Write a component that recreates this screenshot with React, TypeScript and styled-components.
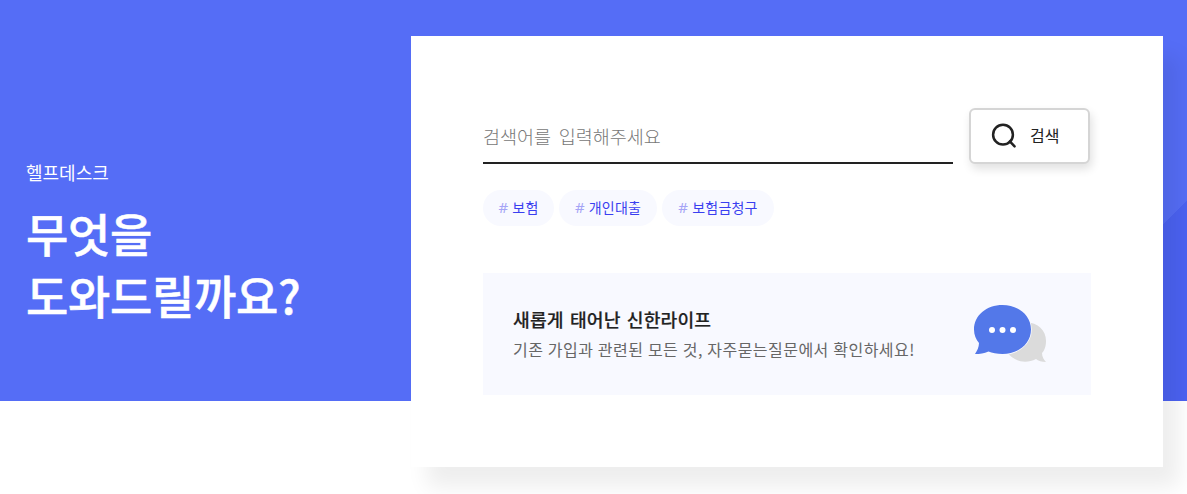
import { useState } from 'react';
import styled, { createGlobalStyle } from 'styled-components';

const GlobalStyle = createGlobalStyle`
	* {
		box-sizing: border-box;
	}

	body {
		margin: 0;
		overflow: hidden;
		background: #fff;
		font-family: 'Noto Sans CJK KR', 'Noto Sans', sans-serif;
		color: #222;
	}

	h1,
	p {
		margin: 0;
	}
`;

const Hero = styled.main`
	display: flex;
	align-items: flex-start;
	width: 1187px;
	height: 494px;
	padding: 36px 24px 0 26px;
	overflow: hidden;
	background:
		linear-gradient(135deg, transparent 50%, #4b62f2 50%) right 201px / 200px 200px no-repeat,
		linear-gradient(#556df6, #556df6) 0 0 / 100% 401px no-repeat,
		#fff;
`;

const Intro = styled.div`
	flex: 0 0 385px;
	padding-top: 122px;
	color: #fff;
`;

const Eyebrow = styled.p`
	font-size: 18px;
	line-height: 28px;
`;

const Title = styled.h1`
	margin-top: 15px;
	font-size: 46px;
	font-weight: 500;
	line-height: 62px;
	letter-spacing: -0.3px;
	-webkit-text-stroke: 0.5px #fff;
`;

const Card = styled.section`
	flex: 0 0 752px;
	height: 431px;
	padding: 72px 72px 0;
	background: #fff;
	box-shadow: 16px 20px 20px rgba(0, 0, 0, 0.07);
`;

const SearchForm = styled.form`
	display: flex;
	gap: 16px;
	height: 56px;
`;

const SearchInput = styled.input`
	width: 470px;
	padding: 1px 0 0;
	border: 0;
	border-bottom: 2px solid #222;
	outline: 0;
	background: transparent;
	font-family: inherit;
	font-size: 18.5px;
	font-weight: 300;
	word-spacing: 3.5px;

	&::placeholder {
		color: #777;
		opacity: 1;
	}
`;

const SearchButton = styled.button`
	display: flex;
	align-items: center;
	width: 121px;
	padding: 0 0 0 20px;
	border: 2px solid #d5d5d5;
	border-radius: 6px;
	background: #fff;
	box-shadow: 2px 5px 10px rgba(0, 0, 0, 0.12);
	font-family: inherit;
	font-size: 16px;
	color: #222;
	cursor: pointer;

	& > svg {
		margin-right: 13px;
	}

	& > span {
		padding-bottom: 2px;
	}
`;

const TagList = styled.div`
	display: flex;
	gap: 5px;
	margin-top: 26px;
`;

const Tag = styled.button<{ $width: number }>`
	width: ${({ $width }) => $width}px;
	height: 36px;
	padding: 0 0 2px;
	border: 0;
	border-radius: 18px;
	background: #f8f9ff;
	font-family: inherit;
	font-size: 14px;
	letter-spacing: 0.2px;
	white-space: nowrap;
	color: #3a3ff0;
	cursor: pointer;

	& > span {
		margin-right: 4px;
		font-family: 'Noto Sans', sans-serif;
		font-size: 15px;
		color: #a5a4f6;
	}
`;

const Banner = styled.div`
	display: flex;
	justify-content: space-between;
	height: 122px;
	margin-top: 47px;
	padding: 30px 44px 0 30px;
	background: #f8f9ff;

	& > svg {
		margin-top: 1px;
	}
`;

const BannerTitle = styled.p`
	font-size: 18.2px;
	font-weight: 500;
	line-height: 32px;
	letter-spacing: 0.15px;
	word-spacing: 2px;
	-webkit-text-stroke: 0.2px #222;
`;

const BannerText = styled.p`
	font-size: 16px;
	line-height: 28px;
	letter-spacing: 0.47px;
	word-spacing: 0.4px;
	color: #666;
`;

const SearchIcon = () => (
	<svg width='26' height='26' viewBox='0 0 26 26' fill='none' stroke='#222' strokeWidth='2.5'>
		<circle cx='12' cy='11.7' r='9.9' />
		<path d='M18.8 18.3L23.6 23.3' strokeLinecap='round' />
	</svg>
);

const ChatIcon = () => (
	<svg width='74' height='60' viewBox='0 0 74 60'>
		<path
			d='M53 18C65 19 73 26 73 37C73 43 71 47 69 49C69 53 71 56 73 58C69 58 65 57 63 55C53 60 41 58 34 48Z'
			fill='#dbdbdb'
		/>
		<path
			d='M29.5 1C45.5 1 58 11.5 58 25.5C58 39.5 45.5 50 29.5 50C24 50 19 49 15.5 47.5C11 49.5 7 50 2 50C4 47 6 43 6 39C3 35.5 1 31 1 25.5C1 11.5 13.5 1 29.5 1Z'
			fill='#5378e9'
			stroke='#f8f9ff'
			strokeWidth='1.5'
			paintOrder='stroke'
		/>
		<circle cx='19' cy='26' r='3' fill='#fff' />
		<circle cx='29.5' cy='26' r='3' fill='#fff' />
		<circle cx='40' cy='26' r='3' fill='#fff' />
	</svg>
);

const tags = [
	{ name: '보험', width: 71 },
	{ name: '개인대출', width: 98 },
	{ name: '보험금청구', width: 112 },
];

const App = () => {
	const [query, setQuery] = useState('');

	return (
		<>
			<GlobalStyle />
			<Hero>
				<Intro>
					<Eyebrow>헬프데스크</Eyebrow>
					<Title>
						무엇을
						<br />
						도와드릴까요?
					</Title>
				</Intro>
				<Card>
					<SearchForm onSubmit={(event) => event.preventDefault()}>
						<SearchInput
							value={query}
							onChange={(event) => setQuery(event.target.value)}
							placeholder='검색어를 입력해주세요'
						/>
						<SearchButton type='submit'>
							<SearchIcon />
							<span>검색</span>
						</SearchButton>
					</SearchForm>
					<TagList>
						{tags.map(({ name, width }) => (
							<Tag key={name} $width={width} onClick={() => setQuery(name)}>
								<span>#</span>
								{name}
							</Tag>
						))}
					</TagList>
					<Banner>
						<div>
							<BannerTitle>새롭게 태어난 신한라이프</BannerTitle>
							<BannerText>기존 가입과 관련된 모든 것, 자주묻는질문에서 확인하세요!</BannerText>
						</div>
						<ChatIcon />
					</Banner>
				</Card>
			</Hero>
		</>
	);
};

export default App;
